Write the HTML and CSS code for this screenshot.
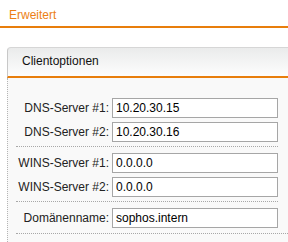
FILE: index.html
```html
<!DOCTYPE html>
<html lang="de">
<head>
    <meta charset="UTF-8">
    <meta name="viewport" content="width=device-width, initial-scale=1.0">
    <title>Erweitert - Clientoptionen</title>
    <link rel="stylesheet" href="styles.css">
</head>
<body>
    <div class="section-title">Erweitert</div>

    <div class="panel">
        <div class="panel-head">Clientoptionen</div>
        <div class="panel-body">
            <div class="group">
                <label class="row"><span class="label">DNS-Server #1:</span><input class="field" type="text" value="10.20.30.15"></label>
                <label class="row"><span class="label">DNS-Server #2:</span><input class="field" type="text" value="10.20.30.16"></label>
            </div>
            <div class="group">
                <label class="row"><span class="label">WINS-Server #1:</span><input class="field" type="text" value="0.0.0.0"></label>
                <label class="row"><span class="label">WINS-Server #2:</span><input class="field" type="text" value="0.0.0.0"></label>
            </div>
            <div class="group wide">
                <label class="row"><span class="label">Domänenname:</span><input class="field" type="text" value="sophos.intern"></label>
            </div>
        </div>
    </div>
</body>
</html>
```

FILE: styles.css
```css
* { margin: 0; padding: 0; box-sizing: border-box; }

body {
    font-family: "Liberation Sans", Arial, sans-serif;
    font-size: 12px;
    color: #222;
    background: #fff;
    width: 288px;
    height: 242px;
    overflow: hidden;
}

.section-title {
    padding: 8px 0 4px 9px;
    line-height: 14px;
    color: #ec7f16;
    border-bottom: 2px solid #e87e0c;
}

.panel {
    margin: 19px 0 0 7px;
}

.panel-head {
    padding: 6px 0 8px 14px;
    line-height: 14px;
    color: #111;
    background: linear-gradient(#eaebeb, #fdfdfd);
    border-top: 1px solid #d6d6d6;
    border-left: 1px solid #c8c8c8;
    border-bottom: 2px solid #e87e0c;
    border-top-left-radius: 4px;
}

.panel-body {
    background: #f9f9f9;
    border-left: 1px dotted #b4b4b4;
    padding: 20px 0 20px 8px;
}

.group {
    width: 262px;
    display: flex;
    flex-direction: column;
    gap: 4px;
    padding: 6px 0 4px;
    border-bottom: 1px dotted #a8a8a8;
}

.group:first-child { padding-top: 0; }

.group.wide {
    width: auto;
    padding-bottom: 5px;
}

.row {
    display: grid;
    grid-template-columns: 93px 166px;
    column-gap: 3px;
    align-items: center;
}

.label {
    text-align: right;
    white-space: nowrap;
}

.field {
    height: 20px;
    width: 166px;
    padding: 0 3px;
    border: 1px solid #a6a6a6;
    background: #fff;
    font-family: inherit;
    font-size: 12px;
    color: #000;
    outline: none;
}
```
